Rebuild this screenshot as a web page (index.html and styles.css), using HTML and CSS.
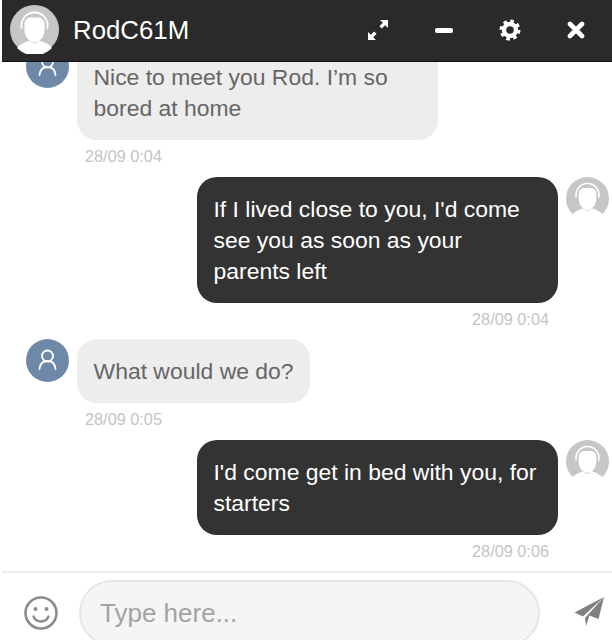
FILE: index.html
```html
<!DOCTYPE html>
<html lang="en">
<head>
    <meta charset="UTF-8">
    <meta name="viewport" content="width=device-width, initial-scale=1.0">
    <title>Chat</title>
    <link rel="stylesheet" href="styles.css">
</head>
<body>
<svg class="defs" width="0" height="0">
    <symbol id="face" viewBox="0 0 49 49">
        <circle cx="24.5" cy="24.5" r="24.5" fill="#c6c6c6"/>
        <path d="M7 43c3-4 8-6 13-7.500c1.500 2 3 3 4.500 3s3-1 4.500-3c5 1.500 10 3.500 13 7.500a24.500 24.500 0 0 1-35 0z" fill="#fff"/>
        <path d="M11.500 23c-1-9 5-15.500 13-15.500s14 6.500 13 15.500" fill="none" stroke="#fff" stroke-width="1.800" stroke-linecap="round"/>
        <path d="M14.500 19c0-4 3-6.500 6-6.500h8c3 0 6 2.500 6 6.500 .5 7-.5 11-2.500 14-2 2.500-5 4.500-7.500 4.500s-5.500-2-7.500-4.500c-2-3-3-7-2.500-14z" fill="#fff"/>
    </symbol>
    <symbol id="person" viewBox="0 0 43 43">
        <circle cx="21.500" cy="21.500" r="21.500" fill="#6e89a7"/>
        <circle cx="21.500" cy="17" r="5.500" fill="none" stroke="#fff" stroke-width="1.800"/>
        <path d="M13.500 30c.5-5 3.500-8 8-8s7.500 3 8 8" fill="none" stroke="#fff" stroke-width="1.800" stroke-linecap="round"/>
    </symbol>
</svg>

<div class="chat">
    <div class="top-bar">
        <svg class="top-avatar"><use href="#face"/></svg>
        <div class="top-name">RodC61M</div>
        <div class="top-icons">
            <div class="top-icon">
                <svg width="22" height="22" viewBox="0 0 22 22">
                    <path d="M13 1h8v8l-2.800-2.800-3.400 3.400-2.400-2.400 3.400-3.400zM9 21H1v-8l2.800 2.800 3.400-3.400 2.400 2.400-3.400 3.400z" fill="#fff"/>
                </svg>
            </div>
            <div class="top-icon"><div class="minus"></div></div>
            <div class="top-icon">
                <svg width="22" height="22" viewBox="0 0 22 22">
                    <circle cx="11" cy="11" r="6" fill="none" stroke="#fff" stroke-width="4.400"/>
                    <circle cx="11" cy="11" r="8.800" fill="none" stroke="#fff" stroke-width="3.400" stroke-dasharray="3.500 3.410"/>
                </svg>
            </div>
            <div class="top-icon">
                <svg width="18" height="18" viewBox="0 0 18 18">
                    <path d="M3 3l12 12M15 3L3 15" stroke="#fff" stroke-width="4.600" stroke-linecap="round"/>
                </svg>
            </div>
        </div>
    </div>

    <div class="messages">
        <div class="msg msg-in first">
            <svg class="msg-avatar"><use href="#person"/></svg>
            <div class="msg-body">
                <div class="bubble wide">Nice to meet you Rod. I’m so bored at home</div>
                <div class="time">28/09 0:04</div>
            </div>
        </div>
        <div class="msg msg-out">
            <div class="msg-body">
                <div class="bubble">If I lived close to you, I'd come see you as soon as your parents left</div>
                <div class="time">28/09 0:04</div>
            </div>
            <svg class="msg-avatar"><use href="#face"/></svg>
        </div>
        <div class="msg msg-in">
            <svg class="msg-avatar"><use href="#person"/></svg>
            <div class="msg-body">
                <div class="bubble">What would we do?</div>
                <div class="time">28/09 0:05</div>
            </div>
        </div>
        <div class="msg msg-out">
            <div class="msg-body">
                <div class="bubble">I'd come get in bed with you, for starters</div>
                <div class="time">28/09 0:06</div>
            </div>
            <svg class="msg-avatar"><use href="#face"/></svg>
        </div>
    </div>

    <div class="bottom-bar">
        <svg class="smiley" width="36" height="36" viewBox="0 0 36 36">
            <circle cx="18" cy="18" r="15.500" fill="none" stroke="#8c8c8c" stroke-width="2.600"/>
            <circle cx="12.500" cy="14" r="2" fill="#8c8c8c"/>
            <circle cx="23.500" cy="14" r="2" fill="#8c8c8c"/>
            <path d="M10.500 21.500c1.500 3.500 4 5 7.500 5s6-1.500 7.500-5" fill="none" stroke="#8c8c8c" stroke-width="2.400" stroke-linecap="round"/>
        </svg>
        <div class="type-box">Type here...</div>
        <svg class="send" width="32" height="32" viewBox="0 0 32 32">
            <path d="M31 1L1.500 16.500l8.500 4zM31 1L25.500 23l-9-3.500-3.500 10.500-1-8z" fill="#808080"/>
        </svg>
    </div>
</div>
</body>
</html>
```

FILE: styles.css
```css
html, body {
    margin: 0;
    padding: 0;
    background-color: #fff;
}
.defs {
    position: absolute;
}
.chat {
    height: 640px;
    display: flex;
    flex-direction: column;
    overflow: hidden;
    font-family: "Liberation Sans", Arial, sans-serif;
}
.top-bar {
    flex: none;
    position: relative;
    z-index: 2;
    height: 61px;
    margin-left: 2px;
    padding-left: 8px;
    display: flex;
    align-items: flex-start;
    background-color: #2a2a2a;
    border-bottom: 1px solid #111;
}
.top-avatar {
    width: 49px;
    height: 49px;
    margin-top: 5px;
}
.top-name {
    margin-left: 14px;
    line-height: 60px;
    font-size: 25.800px;
    color: #fff;
}
.top-icons {
    margin-left: auto;
    margin-right: 3px;
    display: flex;
}
.top-icon {
    width: 66px;
    height: 60px;
    display: flex;
    align-items: center;
    justify-content: center;
}
.minus {
    width: 18px;
    height: 5px;
    border-radius: 2px;
    background-color: #fff;
}
.messages {
    flex: 1;
    min-height: 0;
    overflow: hidden;
    padding: 0 3px 0 26px;
}
.msg {
    display: flex;
    gap: 8px;
}
.msg.first {
    margin-top: -17px;
}
.msg-out {
    justify-content: flex-end;
}
.msg-avatar {
    flex: none;
    width: 43px;
    height: 43px;
}
.msg-body {
    display: flex;
    flex-direction: column;
    align-items: flex-start;
}
.msg-out .msg-body {
    align-items: flex-end;
}
.bubble {
    box-sizing: border-box;
    max-width: 361px;
    padding: 17px 16.500px 16px;
    border-radius: 20px;
    font-size: 22.930px;
    line-height: 31px;
    color: #666;
    background-color: #ededed;
}
.msg-out .bubble {
    width: 361px;
    color: #fff;
    background-color: #333;
}
.time {
    height: 36.700px;
    padding: 7px 9px 0 8px;
    box-sizing: border-box;
    font-size: 16.300px;
    line-height: 18px;
    color: #c4c4c4;
}
.bottom-bar {
    flex: none;
    box-sizing: border-box;
    height: 69px;
    margin-left: 2px;
    padding-top: 7px;
    display: flex;
    align-items: flex-start;
    background-color: #fff;
    border-top: 2px solid #ececec;
}
.smiley {
    flex: none;
    margin: 15px 0 0 21px;
}
.type-box {
    flex: none;
    box-sizing: border-box;
    width: 461px;
    height: 66px;
    margin-left: 20px;
    padding: 0 19px;
    border: 2px solid #e6e6e6;
    border-radius: 33px;
    background-color: #f5f5f5;
    font-size: 26px;
    line-height: 62px;
    color: #a3a3a3;
}
.send {
    flex: none;
    margin: 16px 0 0 33px;
}
```
